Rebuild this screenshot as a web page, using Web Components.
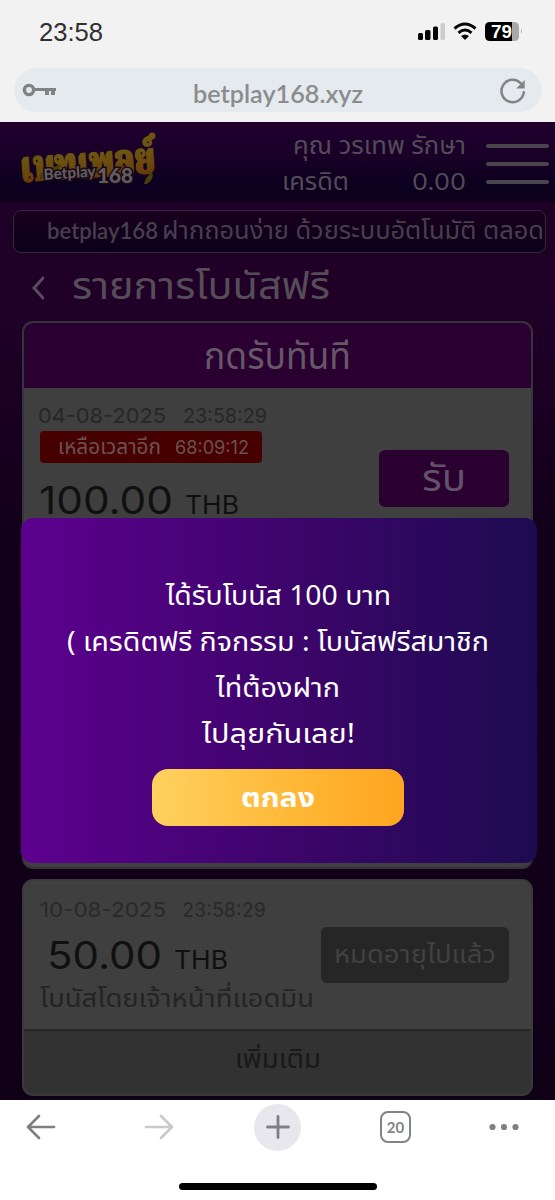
<!DOCTYPE html>
<html lang="th">
<head>
<meta charset="utf-8">
<title>Betplay168</title>
<style>
html,body{margin:0;padding:0;background:#fff;overflow:hidden}
body{width:555px;height:1200px;font-family:"Noto Sans Thai","Noto Sans","Open Sans",sans-serif}
</style>
</head>
<body>
<phone-page></phone-page>
<script>
const define = (name, html, ready) => customElements.define(name, class extends HTMLElement {
  connectedCallback() {
    if (this.shadowRoot) return;
    const t = document.createElement('template');
    t.innerHTML = html;
    this.attachShadow({mode: 'open'}).appendChild(t.content.cloneNode(true));
    if (ready) ready(this);
  }
});

// A single line of text: w = drawn width, s = font size. The bottom of the box is the baseline.
define('fit-text', `<style>
:host{display:block;flex:none;white-space:nowrap;line-height:1}
span{display:inline-block;transform-origin:0 0}
i{display:inline-block;width:0;height:0}
</style><span><slot></slot><i></i></span>`, el => {
  const w = +el.getAttribute('w'), s = +el.getAttribute('s'), h = Math.round(s * .75);
  el.style.cssText += `;width:${w}px;height:${h}px;font-size:${s}px`;
  const span = el.shadowRoot.querySelector('span'), mark = el.shadowRoot.querySelector('i');
  const box = el.getBoundingClientRect(), a = span.getBoundingClientRect();
  const base = mark.getBoundingClientRect().bottom - box.top;
  span.style.transform = `translate(${box.left - a.left}px,${h - base}px) scaleX(${w / a.width})`;
});

define('status-bar', `<style>
:host{display:flex;height:68px;box-sizing:border-box;padding:22px 32px 0 39px;justify-content:space-between;align-items:flex-start;font-family:"Liberation Sans",sans-serif;color:#303030}
fit-text{margin-top:-1px}
svg{display:block}
</style><fit-text w="64" s="26">23:58</fit-text>
<svg width="106" height="20" viewBox="417 22 106 20">
<g fill="#050505"><rect x="418" y="33" width="5" height="7" rx="1.5"/><rect x="425" y="30" width="5.5" height="10" rx="1.5"/><rect x="433" y="26.500" width="5" height="13.500" rx="1.500"/></g><rect x="440.500" y="23" width="4.500" height="17" rx="1.500" fill="#ccc"/>
<g fill="none" stroke="#050505" stroke-width="3"><path d="M454.500 28.500Q465 19.500 475.500 28.500"/><path d="M458.500 32.800Q465 27.300 471.500 32.800"/></g><path d="M461 36Q465 33 469 36L465 40Z"/>
<path d="M490 22h22v19h-22q-5 0-5-5v-9q0-5 5-5z"/><path d="M512 22h2q5 0 5 5v9q0 5-5 5h-2z" fill="#a8a8ad"/><path d="M521 28.500q2 3 0 5z" fill="#aaa"/>
<text x="491" y="38" font-size="17.500" font-weight="bold" textLength="21" lengthAdjust="spacingAndGlyphs" fill="#fff">79</text></svg>`);

define('address-bar', `<style>
:host{display:flex;box-sizing:border-box;height:44px;margin:0 13px 10px 14px;padding:0 15px 0 8px;border-radius:22px;background:#e5eaee;justify-content:space-between;align-items:center;font-family:Lato,sans-serif;font-weight:600;color:#8b8c8d}
fit-text{position:relative;top:3px;left:-1px}
svg{flex:none}
.k{margin-top:-1px}.r{margin-top:3px}
</style><svg class="k" width="35" height="16" viewBox="0 0 35 16" fill="none" stroke="#808284"><circle cx="7" cy="8" r="4.600" stroke-width="3.400"/><path d="M12 7.500h22" stroke-width="3"/><path d="M25 8v5M31 8v5" stroke-width="4"/></svg>
<fit-text w="170" s="25">betplay168.xyz</fit-text>
<svg class="r" width="27" height="27" viewBox="0 0 27 27"><path d="M23.800 14.200A11.200 11.200 0 1 1 20.800 5.300" fill="none" stroke="#828486" stroke-width="2.500" stroke-linecap="round"/><path d="M24.700 2v8.500h-8.500z" fill="#828486"/></svg>`);

define('site-header', `<style>
:host{display:flex;box-sizing:border-box;height:81px;padding:6px 6px 0 18px;background:linear-gradient(#200029,#1e002d 12px,#170025 40px,#0c0020 60px,#0b001d 76px,#170020);color:#534b58}
.who{flex:1;display:flex;flex-direction:column;align-items:flex-end;margin-right:20px}
.row{display:flex;height:36px;gap:63px;align-items:flex-end}
.row:first-child{height:26px}
.num{font-family:Inter,sans-serif}
.menu{width:63px;margin-top:16px;display:grid;gap:14px;align-content:start}
.menu b{height:4px;border-radius:2px;background:#4a454d}
svg{overflow:visible}
</style>
<svg width="144" height="66" viewBox="18 128 144 66"><defs><linearGradient id="g" x1="0" y1="0" x2="0" y2="1"><stop offset=".35" stop-color="#6c5510"/><stop offset=".6" stop-color="#6a430a"/><stop offset=".8" stop-color="#632a05"/></linearGradient></defs>
<g transform="rotate(-4 88 160)" font-family="'Noto Serif Thai','Noto Serif',serif" font-weight="900"><text x="20" y="177" font-size="43" textLength="135" lengthAdjust="spacingAndGlyphs" fill="url(#g)" stroke="url(#g)" stroke-width="1.800">เบทเพลย์</text></g>
<path d="M41 181q-4-8 7-12t13-5q-1 6-10 8q-8 2-10 9M144 184q1-6 8-13q3 8-5 13z" fill="#453f0a"/>
<g font-family="Lato,sans-serif" font-weight="900" fill="#625c62" stroke="#170a10" stroke-width="3" paint-order="stroke"><text x="44" y="180" font-size="15.500" transform="rotate(-4 44 180)" textLength="52" lengthAdjust="spacingAndGlyphs">Betplay</text><text x="97" y="183" font-size="21" textLength="36" lengthAdjust="spacingAndGlyphs">168</text></g></svg>
<div class="who"><div class="row"><fit-text w="173" s="25">คุณ วรเทพ รักษา</fit-text></div><div class="row"><fit-text w="67" s="25">เครดิต</fit-text><fit-text class="num" w="54" s="23">0.00</fit-text></div></div>
<div class="menu"><b></b><b></b><b></b></div>`);

define('news-ticker', `<style>
:host{display:flex;box-sizing:border-box;height:43px;margin:7px 9px 0 13px;border:1.500px solid #37263e;border-radius:8px;background:linear-gradient(#19001e,#0b001b);padding:0 0 13px 33px;gap:4px;align-items:flex-end;color:#483f4c}
.en{font-family:Lato,sans-serif;font-weight:600}
</style><fit-text class="en" w="111" s="22">betplay168</fit-text><fit-text w="382" s="25">ฝากถอนง่าย ด้วยระบบอัตโนมัติ ตลอด</fit-text>`);

define('page-title', `<style>
:host{display:flex;box-sizing:border-box;height:68px;padding:0 0 22px 31px;align-items:flex-end;color:#554d58}
svg{margin:0 28px -2px 0}
</style><svg width="13" height="26" viewBox="0 0 13 26"><path d="M13 2L3 13L13 24" fill="none" stroke="#554d58" stroke-width="3"/></svg><fit-text w="258" s="38">รายการโบนัสฟรี</fit-text>`);

define('bonus-card', `<style>
:host{display:flex;flex-direction:column;box-sizing:border-box;margin:0 22px 0 22px;border:2px solid #37333c;border-radius:11px;background:#3f3f3f;overflow:hidden;flex:none}
:host(.second){margin-top:10px;border-color:#3a393b}
</style><slot></slot>`);

define('active-bonus', `<style>
:host{display:block;height:544px}
.head{display:flex;box-sizing:border-box;height:65px;padding-bottom:19px;justify-content:center;align-items:flex-end;background:#290030;color:#645869}
.body{display:flex;justify-content:space-between;padding:0 22px 0 15px}
.date{display:flex;height:35px;gap:17px;align-items:flex-end;color:#272727;font-family:Inter,sans-serif;margin-left:-1px}
.badge{display:flex;box-sizing:border-box;width:222px;height:32px;margin:8px 0 0 1px;padding:0 0 9px 18px;gap:14px;align-items:flex-end;border-radius:4px;background:#470000;color:#6b5151}
.money{display:flex;height:51px;gap:12px;align-items:flex-end;color:#101010;margin-left:0;font-family:Inter,sans-serif}
.num{font-family:Inter,sans-serif}
.btn{display:flex;box-sizing:border-box;width:130px;height:57px;margin-top:62px;border-radius:6px;background:#290030;color:#625368;justify-content:center;align-items:flex-end;padding-bottom:16px}
</style><div class="head"><fit-text w="147" s="37">กดรับทันที</fit-text></div>
<div class="body"><div><div class="date"><fit-text w="128" s="20.5">04-08-2025</fit-text><fit-text w="84" s="20.5">23:58:29</fit-text></div>
<div class="badge"><fit-text w="103" s="21">เหลือเวลาอีก</fit-text><fit-text class="num" w="74" s="18.5">68:09:12</fit-text></div>
<div class="money"><fit-text w="134" s="37.5">100.00</fit-text><fit-text w="54" s="25.5">THB</fit-text></div></div>
<div class="btn"><fit-text w="44" s="38">รับ</fit-text></div></div>`);

define('expired-bonus', `<style>
:host{display:block;height:213px}
.body{display:flex;height:148px;justify-content:space-between;padding:0 22px 0 16px}
.date{display:flex;height:36px;gap:16px;align-items:flex-end;color:#292929;font-family:Inter,sans-serif}
.money{display:flex;height:52px;gap:12px;align-items:flex-end;color:#101010;margin-left:7px;font-family:Inter,sans-serif}
.note{display:flex;height:38px;align-items:flex-end;color:#242424}
.left{width:273px}.btn{display:flex;box-sizing:border-box;width:188px;height:56px;margin-top:46px;border-radius:6px;background:#262626;color:#414141;justify-content:center;align-items:flex-end;padding-bottom:20px}
.more{display:flex;box-sizing:border-box;height:65px;border-top:2px solid #272727;background:#323232;color:#191919;justify-content:center;align-items:flex-end;padding-bottom:26px}
</style><div class="body"><div class="left"><div class="date"><fit-text w="126" s="20.5">10-08-2025</fit-text><fit-text w="84" s="20.5">23:58:29</fit-text></div>
<div class="money"><fit-text w="115" s="37.5">50.00</fit-text><fit-text w="54" s="25.5">THB</fit-text></div>
<div class="note"><fit-text w="274" s="25">โบนัสโดยเจ้าหน้าที่แอดมิน</fit-text></div></div>
<div class="btn"><fit-text w="162" s="25">หมดอายุไปแล้ว</fit-text></div></div>
<div class="more"><fit-text w="86" s="26">เพิ่มเติม</fit-text></div>`);

define('result-dialog', `<style>
:host{position:absolute;left:21px;top:396px;width:516px;height:345px;box-sizing:border-box;border-radius:12px;background:linear-gradient(90deg,#5d008f,#3b0569 55%,#1d0b51);display:flex;flex-direction:column;align-items:center;padding:41px 2px 0 0;color:#fff}
.line{display:flex;height:46px;align-items:flex-end}
.ok{display:flex;box-sizing:border-box;width:252px;height:57px;margin:26px 0 0;padding:0 0 19px;border-radius:16px;background:linear-gradient(90deg,#ffd15f,#ffb837 55%,#ffa51f);font-weight:bold;justify-content:center;align-items:flex-end}
</style><div class="line"><fit-text w="225" s="27">ได้รับโบนัส 100 บาท</fit-text></div><div class="line"><fit-text w="422" s="27">( เครดิตฟรี กิจกรรม : โบนัสฟรีสมาชิก</fit-text></div><div class="line"><fit-text w="124" s="27">ไท่ต้องฝาก</fit-text></div><div class="line"><fit-text w="153" s="27">ไปลุยกันเลย!</fit-text></div>
<div class="ok" role="button"><fit-text w="74" s="27">ตกลง</fit-text></div>`);

define('web-view', `<style>
:host{display:flex;flex-direction:column;position:relative;height:978px;background:linear-gradient(#1d0025,#200027 18%,#190022 30%,#12001a 42%,#100016)}
</style><site-header></site-header><news-ticker></news-ticker><page-title></page-title><bonus-card><active-bonus></active-bonus></bonus-card><bonus-card class="second"><expired-bonus></expired-bonus></bonus-card><result-dialog></result-dialog>`);

define('browser-toolbar', `<style>
:host{display:flex;flex-direction:column;align-items:center;height:100px;background:#fff}
.tools{display:flex;box-sizing:border-box;width:100%;height:54px;padding:0 35px 0 26px;align-items:center}
svg{display:block;flex:none}
.fwd{margin-left:88px}
.add{display:grid;place-items:center;width:47px;height:47px;margin:0 79px 0 80px;border-radius:50%;background:#e8e7ed}
.home{width:198px;height:7px;margin-top:29px;border-radius:4px;background:#000}
.tabs{display:grid;place-items:center;box-sizing:border-box;width:31px;height:32px;margin-right:78px;border:2.500px solid #808484;border-radius:8px;color:#808484;font:bold 15px Lato,sans-serif}
</style><div class="tools">
<svg width="30" height="26" viewBox="0 0 30 26" fill="none" stroke="#7d8080" stroke-width="2.700" stroke-linecap="round" stroke-linejoin="round"><path d="M28 13H2M13 2L2 13L13 24"/></svg>
<svg class="fwd" width="30" height="26" viewBox="0 0 30 26" fill="none" stroke="#c9c9c9" stroke-width="2.700" stroke-linecap="round" stroke-linejoin="round"><path d="M2 13H28M17 2L28 13L17 24"/></svg>
<div class="add"><svg width="24" height="24" viewBox="0 0 24 24" stroke="#7d8083" stroke-width="2.800" stroke-linecap="round"><path d="M12 1.500V22.500M1.500 12H22.500"/></svg></div>
<div class="tabs">20</div>
<svg width="30" height="8" viewBox="0 0 30 8" fill="#7d8080"><circle cx="3.500" cy="4" r="3.100"/><circle cx="15" cy="4" r="3.100"/><circle cx="26.500" cy="4" r="3.100"/></svg>
</div><div class="home"></div>`);

define('phone-page', `<style>
:host{display:block;width:555px;height:1200px;background:#f2f2f2}
</style><status-bar></status-bar><address-bar></address-bar><web-view></web-view><browser-toolbar></browser-toolbar>`);
</script>
</body>
</html>
